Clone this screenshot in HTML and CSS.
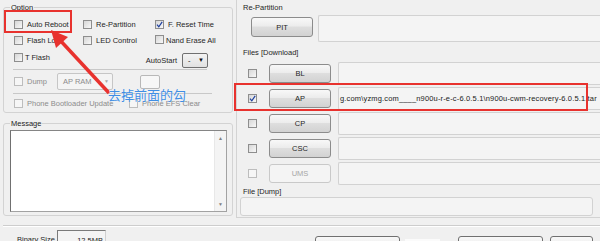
FILE: index.html
```html
<!DOCTYPE html>
<html lang="zh-cn">
<head>
    <meta charset="UTF-8">
    <meta name="viewport" content="width=device-width, initial-scale=1.0">
    <title>Odin3</title>
    <link rel="stylesheet" href="styles.css">
</head>
<body>

<div class="window">
    <div class="top">
        <div class="left">
            <fieldset class="group option">
                <legend>Option</legend>
                <div class="row first">
                    <label class="chk c1"><span class="box"></span>Auto Reboot</label>
                    <label class="chk c2"><span class="box"></span>Re-Partition</label>
                    <label class="chk"><span class="box"><svg width="7" height="7" viewBox="0 0 7 7"><path d="M1 3.6 L2.8 5.8 L6.2 0.8" fill="none" stroke="#1d3f9e" stroke-width="1.2"/></svg></span>F. Reset Time</label>
                </div>
                <div class="row second">
                    <label class="chk c1"><span class="box"></span>Flash Lock</label>
                    <label class="chk c2"><span class="box"></span>LED Control</label>
                    <label class="chk tight nand"><span class="box"></span>Nand Erase All</label>
                </div>
                <div class="row third">
                    <label class="chk tight"><span class="box"></span>T Flash</label>
                    <div class="autostart">
                        <span>AutoStart</span>
                        <div class="select"><span>-</span><span class="arrow">&#9660;</span></div>
                    </div>
                </div>
                <div class="rule"></div>
                <div class="row dump off">
                    <label class="chk dumpchk"><span class="box"></span>Dump</label>
                    <div class="select wide"><span>AP RAM</span><span class="arrow">&#9660;</span></div>
                    <div class="smallbox"></div>
                </div>
                <div class="rule long"></div>
                <div class="row pbu off">
                    <label class="chk c3"><span class="box"></span>Phone Bootloader Update</label>
                    <label class="chk"><span class="box"></span>Phone EFS Clear</label>
                </div>
            </fieldset>

            <fieldset class="group message">
                <legend>Message</legend>
                <div class="log">
                    <div class="scroll"><span>&#9650;</span><span>&#9660;</span></div>
                </div>
            </fieldset>
        </div>

        <div class="right">
            <div class="caption">Re-Partition</div>
            <div class="pit-row">
                <button class="btn pit">PIT</button>
                <div class="field"></div>
            </div>

            <div class="caption files">Files [Download]</div>
            <div class="file-row first">
                <span class="box"></span>
                <button class="btn">BL</button>
                <div class="field"></div>
            </div>
            <div class="file-row">
                <span class="box"><svg width="7" height="7" viewBox="0 0 7 7"><path d="M1 3.6 L2.8 5.8 L6.2 0.8" fill="none" stroke="#1d3f9e" stroke-width="1.2"/></svg></span>
                <button class="btn">AP</button>
                <div class="field path">g.com\yzmg.com____n900u-r-e-c-6.0.5.1\n900u-cwm-recovery-6.0.5.1.tar</div>
            </div>
            <div class="file-row">
                <span class="box"></span>
                <button class="btn">CP</button>
                <div class="field"></div>
            </div>
            <div class="file-row">
                <span class="box"></span>
                <button class="btn">CSC</button>
                <div class="field"></div>
            </div>
            <div class="file-row off">
                <span class="box"></span>
                <button class="btn" disabled>UMS</button>
                <div class="field"></div>
            </div>

            <div class="caption dumpcap">File [Dump]</div>
            <div class="field dumpfield"></div>
        </div>
    </div>

    <div class="separator"></div>

    <div class="bottom">
        <span class="binlabel">Binary Size</span>
        <div class="binbox">12.5MB</div>
        <div class="actions">
            <button class="btn big">Start</button>
            <div class="ghost"></div>
            <button class="btn big second">Reset</button>
            <button class="btn exit">Exit</button>
        </div>
    </div>

    <!-- marcações por cima da captura -->
    <div class="mark reboot"></div>
    <div class="mark ap"></div>
    <svg class="arrow-svg" width="600" height="241" viewBox="0 0 600 241">
        <line x1="58" y1="38" x2="109" y2="93" stroke="#e8322e" stroke-width="3.5"/>
        <polygon points="51,30 56,48 68,37" fill="#e8322e"/>
    </svg>
    <div class="note">去掉前面的勾</div>
</div>

</body>
</html>
```

FILE: styles.css
```css
* {
    margin: 0;
    padding: 0;
    box-sizing: border-box;
}
body {
    width: 600px;
    height: 241px;
    overflow: hidden;
    background-color: #f0f0f0;
    font-family: "Liberation Sans", Arial, sans-serif;
    font-size: 7.5px;
    line-height: 9px;
    color: #1f1f1f;
}
.window {
    position: relative;
    width: 600px;
    height: 241px;
}
.top {
    display: flex;
    height: 218px;
    padding-left: 3px;
}
.left {
    width: 230px;
    flex-shrink: 0;
}
.group {
    border: 1px solid #d3d3d3;
    border-radius: 3px;
    padding: 0 0 0 6px;
}
.group legend {
    padding: 0 1px;
    line-height: 9px;
    color: #222;
}
.option {
    margin-top: 3px;
    height: 110px;
}
.row {
    display: flex;
    align-items: center;
    padding-left: 4px;
}
.row.first {
    margin-top: 6px;
    height: 12px;
}
.row.second {
    margin-top: 4px;
    height: 12px;
}
.row.third {
    margin-top: 5px;
    height: 17px;
    align-items: flex-start;
    justify-content: space-between;
    padding-right: 24px;
}
.row.third .chk {
    height: 12px;
}
.row.dump {
    margin-top: 3px;
    height: 17px;
}
.row.pbu {
    margin-top: 3px;
    height: 13px;
}
.rule {
    margin: 1px 0 0 3px;
    width: 194px;
    border-top: 1px solid #c8c8c8;
}
.rule.long {
    margin-top: 3px;
    width: 199px;
}
.chk {
    display: flex;
    align-items: center;
    gap: 4px;
    white-space: nowrap;
}
.chk.tight {
    gap: 2px;
}
.nand .box {
    margin-top: -2px;
}
.c1 { width: 69px; }
.c2 { width: 72px; }
.c3 { width: 115px; }
.dumpchk { width: 43px; }
.box {
    width: 9px;
    height: 9px;
    flex-shrink: 0;
    display: flex;
    align-items: center;
    justify-content: center;
    border: 1px solid #8e8e8e;
    background: linear-gradient(135deg, #d6d6d6, #f8f8f8);
}
.off {
    color: #8c8c8c;
}
.off .box {
    border-color: #bdbdbd;
    background: #f6f6f6;
}
.autostart {
    display: flex;
    align-items: center;
    gap: 5px;
    margin-top: 2px;
}
.select {
    display: flex;
    align-items: center;
    justify-content: space-between;
    width: 26px;
    height: 15px;
    padding: 0 3px 0 5px;
    border: 1px solid #707070;
    border-radius: 2px;
    background: linear-gradient(#f3f3f3, #e1e1e1);
    color: #111;
}
.arrow {
    font-size: 6px;
}
.select.wide {
    width: 56px;
    height: 17px;
    border-color: #c6c6c6;
    background: #f4f4f4;
    color: #8c8c8c;
}
.select.wide .arrow {
    font-size: 5px;
    color: #a8a8a8;
}
.smallbox {
    width: 20px;
    height: 14px;
    margin-left: 27px;
    border: 1px solid #b8b8b8;
    border-radius: 2px;
    background: #f7f7f7;
}
.message {
    margin-top: 6px;
    height: 97px;
    padding: 2px 4px 0 6px;
}
.log {
    display: flex;
    justify-content: flex-end;
    width: 217px;
    height: 82px;
    border: 1px solid #a2a2a2;
    border-left-color: #707070;
    border-top-color: #858585;
    background: #fff;
}
.scroll {
    display: flex;
    flex-direction: column;
    justify-content: space-between;
    align-items: center;
    width: 12px;
    padding: 4px 0;
    background: #f4f4f4;
    border-left: 1px solid #e8e8e8;
    font-size: 5px;
    line-height: 6px;
    color: #808080;
}
.right {
    flex: 1;
    margin-left: 3px;
    height: 218px;
    padding: 3px 0 0 6px;
    border-left: 1px solid #d3d3d3;
    border-bottom: 1px solid #d3d3d3;
}
.caption {
    height: 9px;
    line-height: 9px;
}
.caption.files {
    margin-top: 6px;
}
.caption.dumpcap {
    margin-top: 2px;
}
.pit-row {
    display: flex;
    height: 27px;
    margin-top: 3px;
}
.btn {
    font-family: "Liberation Sans", Arial, sans-serif;
    font-size: 7.5px;
    color: #1f1f1f;
    border: 1px solid #8c8c8c;
    border-radius: 3px;
    background: linear-gradient(#f8f8f8, #ececec 45%, #dedede 50%, #d2d2d2);
}
.btn:disabled {
    color: #a6a6a6;
    border-color: #c9c9c9;
    background: #f4f4f4;
}
.pit {
    width: 62px;
    height: 20px;
    margin: 2px 0 0 8px;
}
.field {
    flex: 1;
    background: #f4f4f4;
    border: 1px solid #d2d2d2;
    border-right: none;
    border-radius: 2px 0 0 2px;
}
.pit-row .field {
    margin-left: 5px;
}
.file-row {
    display: flex;
    align-items: center;
    height: 23px;
    margin-top: 2px;
}
.file-row.first {
    margin-top: 5px;
}
.file-row .box {
    margin-left: 5px;
}
.file-row .btn {
    width: 62px;
    height: 19px;
    margin-left: 12px;
}
.file-row .field {
    height: 23px;
    margin-left: 7px;
}
.field.path {
    padding-left: 1px;
    line-height: 21px;
    letter-spacing: 0.16px;
    white-space: nowrap;
    overflow: hidden;
    color: #222;
}
.dumpfield {
    flex: none;
    width: 353px;
    height: 19px;
    margin: 1px 0 0 -3px;
    border-right: 1px solid #d2d2d2;
    border-radius: 3px;
}
.separator {
    margin: 7px 0 0 3px;
    border-top: 1px solid #cdcdcd;
    border-bottom: 1px solid #fff;
}
.bottom {
    display: flex;
    align-items: flex-start;
    height: 20px;
    padding-left: 17px;
}
.binlabel {
    width: 40px;
    margin-top: 8px;
}
.binbox {
    width: 49px;
    height: 14px;
    margin-top: 3px;
    padding: 5px 2px 0 0;
    text-align: right;
    border: 1px solid #d0d0d0;
    border-top-color: #7a7a7a;
    border-left-color: #7a7a7a;
    background: #f4f4f4;
}
.actions {
    display: flex;
    margin: 9px 0 0 209px;
}
.btn.big {
    width: 85px;
    height: 22px;
    border-color: #707070;
}
.btn.big.second {
    margin-left: 18px;
}
.btn.exit {
    width: 43px;
    height: 22px;
    margin-left: 7px;
    border-color: #707070;
}
.ghost {
    width: 35px;
    height: 10px;
    margin: 3px 0 0 5px;
    background: #fbfbfb;
}
.mark {
    position: absolute;
    border: 2px solid #e8322e;
}
.mark.reboot {
    left: 4px;
    top: 10px;
    width: 68px;
    height: 23px;
}
.mark.ap {
    left: 234px;
    top: 83px;
    width: 354px;
    height: 28px;
}
.arrow-svg {
    position: absolute;
    left: 0;
    top: 0;
}
.note {
    position: absolute;
    left: 108px;
    top: 86px;
    font-family: "Noto Sans CJK SC", sans-serif;
    font-size: 13px;
    line-height: 18px;
    color: #3f8ee4;
    text-shadow: 0 0 1px #fff;
}
```
